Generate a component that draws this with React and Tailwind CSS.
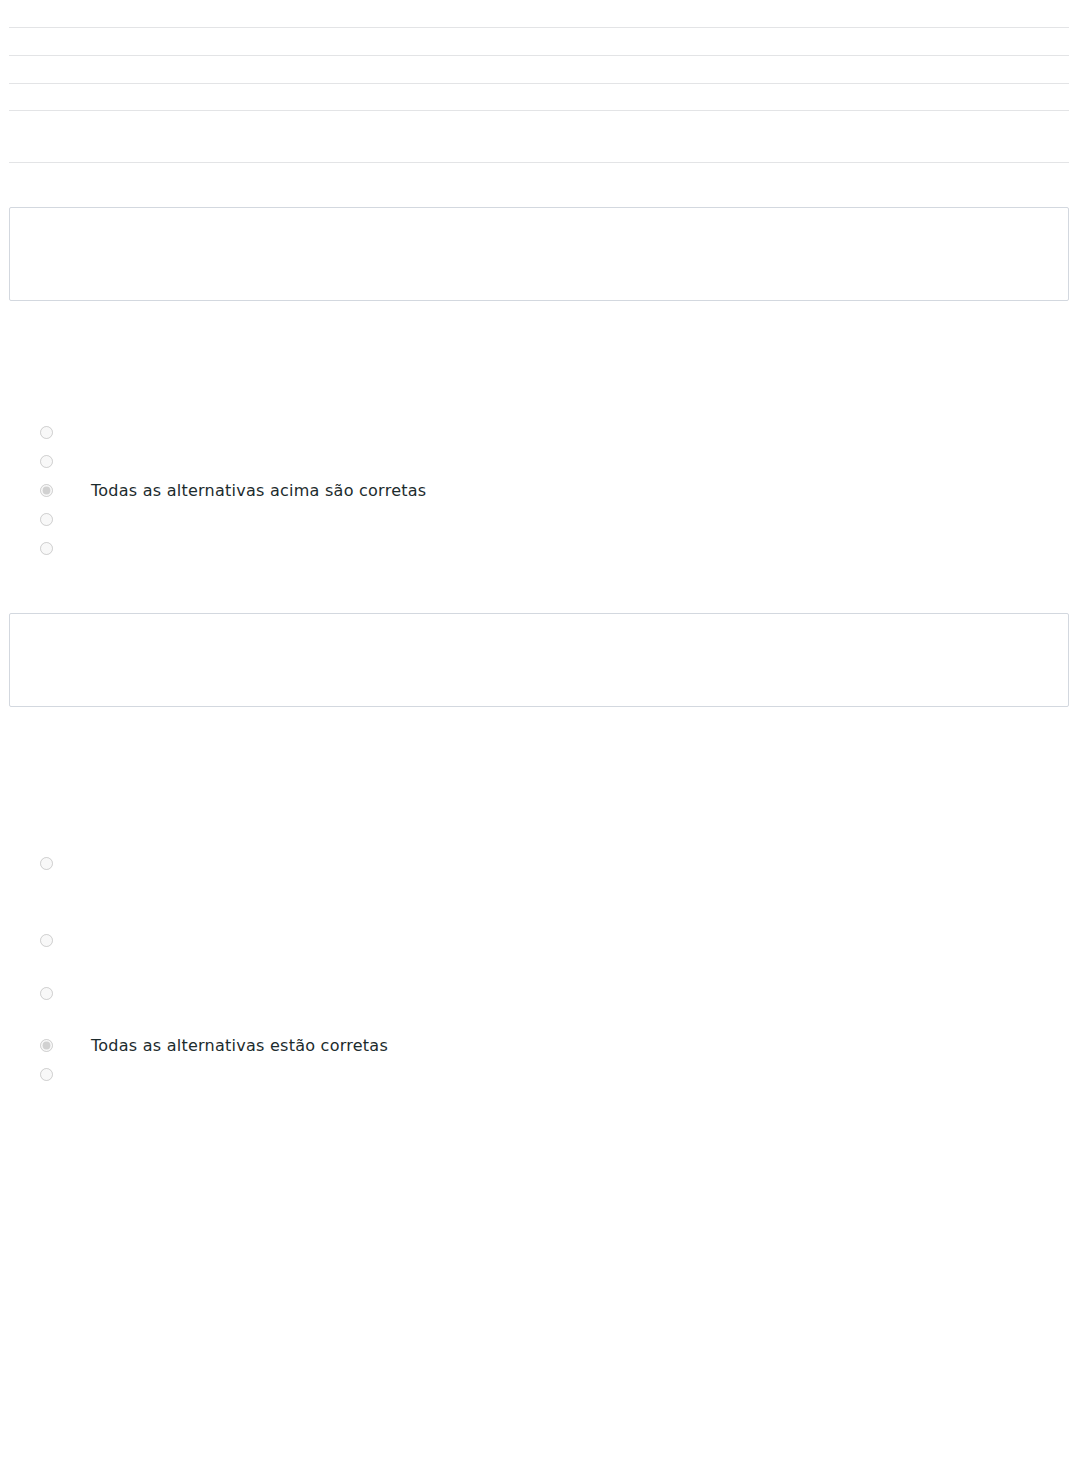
import React from "react";

function Radio({ checked }) {
  return (
    <input
      type="radio"
      disabled
      defaultChecked={checked}
      className="m-0 w-[13px] h-[13px] shrink-0"
    />
  );
}

function Row({ h, checked, text }) {
  return (
    <div className={`flex items-start ${h}`}>
      <div className="w-[82px] shrink-0 flex pt-[8px] pl-[31px]">
        <Radio checked={checked} />
      </div>
      {text ? (
        <span className="text-[16px] leading-[29px] tracking-[0.25px] text-[#1c2b2d] font-['DejaVu_Sans',sans-serif]">
          {text}
        </span>
      ) : null}
    </div>
  );
}

export default function App() {
  return (
    <div className="bg-white min-h-[1481px] px-[9px] font-['DejaVu_Sans',sans-serif]">
      <div className="h-[27px]" />
      <div className="h-[28px] border-t border-[#e3e4e6]" />
      <div className="h-[28px] border-t border-[#e3e4e6]" />
      <div className="h-[27px] border-t border-[#e3e4e6]" />
      <div className="h-[52px] border-t border-[#e3e4e6]" />
      <div className="h-[45px] border-t border-[#e3e4e6]" />

      <div className="h-[94px] border border-[#d3d8df] rounded-[2px]" />

      <div className="h-[117px]" />
      <div className="flex flex-col">
        <Row h="h-[29px]" />
        <Row h="h-[29px]" />
        <Row h="h-[29px]" checked text="Todas as alternativas acima são corretas" />
        <Row h="h-[29px]" />
        <Row h="h-[29px]" />
      </div>

      <div className="h-[50px]" />
      <div className="h-[94px] border border-[#d3d8df] rounded-[2px]" />

      <div className="h-[142px]" />
      <div className="flex flex-col">
        <Row h="h-[77px]" />
        <Row h="h-[53px]" />
        <Row h="h-[52px]" />
        <Row h="h-[29px]" checked text="Todas as alternativas estão corretas" />
        <Row h="h-[29px]" />
      </div>
    </div>
  );
}
